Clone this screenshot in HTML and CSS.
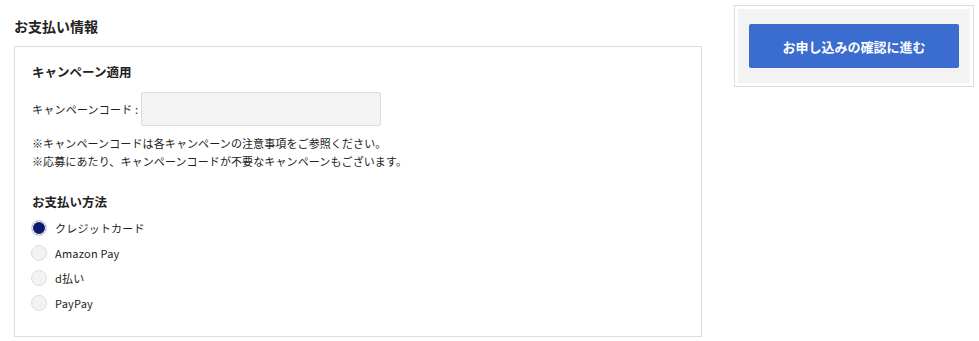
FILE: index.html
```html
<!DOCTYPE html>
<html lang="ja">
<head>
  <meta charset="UTF-8">
  <meta name="viewport" content="width=device-width, initial-scale=1.0">
  <title>お支払い情報</title>
  <link rel="stylesheet" href="styles.css">
</head>
<body>

<div class="page">
  <div class="main">
    <h2 class="section-title">お支払い情報</h2>

    <div class="panel">
      <h3 class="panel-heading">キャンペーン適用</h3>

      <div class="field-row">
        <label for="campaignCode" class="field-label">キャンペーンコード :</label>
        <input type="text" id="campaignCode" class="text-input">
      </div>

      <p class="note">
        ※キャンペーンコードは各キャンペーンの注意事項をご参照ください。<br>
        ※応募にあたり、キャンペーンコードが不要なキャンペーンもございます。
      </p>

      <h3 class="panel-heading method-heading">お支払い方法</h3>

      <div class="radio-list">
        <label class="radio-item">
          <input type="radio" name="payment" value="credit" checked>
          <span class="radio-mark"></span>
          <span>クレジットカード</span>
        </label>
        <label class="radio-item">
          <input type="radio" name="payment" value="amazon">
          <span class="radio-mark"></span>
          <span>Amazon Pay</span>
        </label>
        <label class="radio-item">
          <input type="radio" name="payment" value="dpay">
          <span class="radio-mark"></span>
          <span>d払い</span>
        </label>
        <label class="radio-item">
          <input type="radio" name="payment" value="paypay">
          <span class="radio-mark"></span>
          <span>PayPay</span>
        </label>
      </div>
    </div>
  </div>

  <div class="sidebar">
    <div class="sidebar-inner">
      <button class="submit-button">お申し込みの確認に進む</button>
    </div>
  </div>
</div>

</body>
</html>
```

FILE: styles.css
```css
body {
  margin: 0;
  background: #fff;
  color: #222;
  font-family: "Noto Sans CJK JP", "Noto Sans", sans-serif;
}

.page {
  display: flex;
  align-items: flex-start;
  gap: 32px;
  padding: 5px 0 0 14px;
}

.main {
  width: 688px;
}

.section-title {
  margin: 11px 0 10px;
  font-size: 14px;
  line-height: 20px;
  font-weight: bold;
}

.panel {
  border: 1px solid #ddd;
  padding: 16px 17px 21px;
}

.panel-heading {
  margin: 0;
  font-size: 12.5px;
  line-height: 18px;
  font-weight: bold;
}

.method-heading {
  margin-top: 23px;
}

.field-row {
  display: flex;
  align-items: center;
  margin-top: 11px;
}

.field-label {
  width: 109px;
  white-space: nowrap;
  font-size: 11px;
  letter-spacing: 0.02em;
}

.text-input {
  width: 240px;
  height: 34px;
  box-sizing: border-box;
  border: 1px solid #ddd;
  border-radius: 2px;
  background: #f3f3f3;
  padding: 0 8px;
  font-size: 12px;
}

.note {
  margin: 8px 0 0;
  font-size: 11px;
  line-height: 18px;
  letter-spacing: 0.01em;
}

.radio-list {
  margin-top: 4px;
}

.radio-item {
  display: flex;
  align-items: center;
  height: 25px;
  font-size: 11px;
  letter-spacing: 0.02em;
  cursor: pointer;
}

.radio-item input {
  display: none;
}

.radio-mark {
  width: 16px;
  height: 16px;
  box-sizing: border-box;
  margin: 0 8px 0 -1px;
  border: 1px solid #ddd;
  border-radius: 50%;
  background: #f3f3f3;
}

.radio-item input:checked + .radio-mark {
  background: #0b1a6c;
  box-shadow: inset 0 0 0 1px #fff;
}

.sidebar {
  width: 240px;
  box-sizing: border-box;
  border: 1px solid #ddd;
  padding: 3px;
}

.sidebar-inner {
  background: #f3f3f3;
  padding: 15px 11px;
}

.submit-button {
  display: block;
  width: 100%;
  height: 44px;
  border: none;
  border-radius: 2px;
  background: #3b6ccf;
  color: #fff;
  font-family: inherit;
  font-size: 13px;
  font-weight: bold;
  cursor: pointer;
}
```
